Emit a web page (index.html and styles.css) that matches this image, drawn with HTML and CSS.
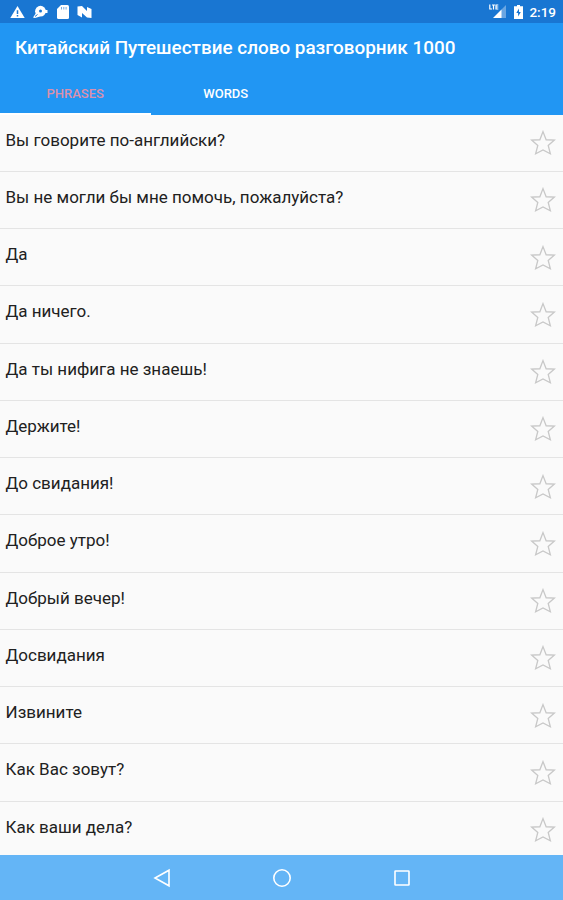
FILE: index.html
```
<!DOCTYPE html>
<html lang="ru">

<head>

	<title>Китайский Путешествие слово разговорник 1000</title>

	<meta charset="utf-8">

	<link rel="stylesheet" href="styles.css">

</head>

<body>

	<!-- star outline shared by all the rows -->
	<svg class="defs" width="0" height="0">
		<symbol id="star" viewBox="0 0 24 24">
			<path d="M12 1.5 L14.9 9 L22.5 9.3 L16.8 14.3 L18.8 22 L12 18.4 L5.2 22 L7.2 14.3 L1.5 9.3 L9.1 9 Z" />
		</symbol>
	</svg>

	<div class="statusbar">
		<div class="notifications">
			<svg width="15" height="14" viewBox="0 0 16 14">
				<path fill="#fff" d="M8 0.5 L15.7 13.5 H0.3 Z" />
				<path stroke="#1976d2" stroke-width="1.6" d="M8 5 V9 M8 10.2 V11.8" />
			</svg>
			<svg width="16" height="14" viewBox="0 0 16 14">
				<circle cx="7.5" cy="6.2" r="5.4" fill="#fff" />
				<path fill="#fff" d="M3 8 L0 12.5 L2 13 L7 11.5 Z M12 5 H14.5 V8 H12 Z" />
				<circle cx="7.5" cy="6" r="1.5" fill="#1976d2" />
				<path stroke="#1976d2" d="M2 11.5 L4.5 9.5" />
			</svg>
			<svg width="12" height="14" viewBox="0 0 12 14">
				<path fill="#fff" d="M4 0 H10.5 Q12 0 12 1.5 V12.5 Q12 14 10.5 14 H1.5 Q0 14 0 12.5 V4 Z" />
				<path stroke="#1976d2" stroke-opacity="0.6" d="M4.5 2 V4.5 M6.8 2 V4.5 M9.1 2 V4.5" />
			</svg>
			<svg width="15" height="14" viewBox="0 0 15 14">
				<path fill="#fff" d="M0.5 1.5 L5 1 L10 6 V2 L14.5 4 V13 L10 12.5 L5 8 V12.5 L0.5 10 Z" />
			</svg>
		</div>
		<div class="system">
			<svg width="18" height="15" viewBox="0 0 18 15">
				<path fill="#6ba6e2" d="M17 1 V14 H12 V6 Z" />
				<path fill="#fff" d="M12.5 5.5 V14 H4 Z" />
				<path fill="none" stroke="#fff" stroke-width="1.2" d="M0.8 0.5 V5 H3 M3 1 H6 M4.5 1 V5.5 M9.3 1 H7 V5 H9.3 M7 3 H9.3" />
			</svg>
			<svg class="battery" width="9" height="14" viewBox="0 0 9 14">
				<path fill="#fff" d="M3 0 H6 V1.3 H9 V14 H0 V1.3 H3 Z" />
				<path fill="#1976d2" d="M5 3.5 L2.3 8 H4.1 V11.5 L6.8 7 H5 Z" />
			</svg>
			<span class="clock">2:19</span>
		</div>
	</div>

	<div class="appbar">
		<h1>Китайский Путешествие слово разговорник 1000</h1>
		<div class="tabs">
			<div class="tab selected">PHRASES</div>
			<div class="tab">WORDS</div>
		</div>
	</div>

	<ul class="phrases">
		<li><span>Вы говорите по-английски?</span><svg class="star"><use href="#star" /></svg></li>
		<li><span>Вы не могли бы мне помочь, пожалуйста?</span><svg class="star"><use href="#star" /></svg></li>
		<li><span>Да</span><svg class="star"><use href="#star" /></svg></li>
		<li><span>Да ничего.</span><svg class="star"><use href="#star" /></svg></li>
		<li><span>Да ты нифига не знаешь!</span><svg class="star"><use href="#star" /></svg></li>
		<li><span>Держите!</span><svg class="star"><use href="#star" /></svg></li>
		<li><span>До свидания!</span><svg class="star"><use href="#star" /></svg></li>
		<li><span>Доброе утро!</span><svg class="star"><use href="#star" /></svg></li>
		<li><span>Добрый вечер!</span><svg class="star"><use href="#star" /></svg></li>
		<li><span>Досвидания</span><svg class="star"><use href="#star" /></svg></li>
		<li><span>Извините</span><svg class="star"><use href="#star" /></svg></li>
		<li><span>Как Вас зовут?</span><svg class="star"><use href="#star" /></svg></li>
		<li><span>Как ваши дела?</span><svg class="star"><use href="#star" /></svg></li>
	</ul>

	<div class="navbar">
		<svg width="20" height="20" viewBox="0 0 20 20"><path d="M17 2.2 V17.8 L3 10 Z" /></svg>
		<svg width="20" height="20" viewBox="0 0 20 20"><circle cx="10" cy="10" r="8.2" /></svg>
		<svg width="20" height="20" viewBox="0 0 20 20"><rect x="3" y="3" width="14" height="14" rx="0.5" /></svg>
	</div>

</body>
</html>
```

FILE: styles.css
```
html,body {
	margin:0;
	padding:0;
	height:100%;
	}
body {
	display:flex;
	flex-direction:column;
	height:900px;
	overflow:hidden;
	background-color:#fafafa;
	font-family:Roboto,"Noto Sans",sans-serif;
	color:#212121;
	}
svg {
	display:block;
	flex:none;
	}
.defs {
	position:absolute;
	}

.statusbar {
	display:flex;
	justify-content:space-between;
	flex:none;
	height:23px;
	padding:0 7px 0 10px;
	background-color:#1976d2;
	color:#fff;
	}
.notifications,
.system {
	display:flex;
	align-items:center;
	}
.notifications {
	gap:8px;
	}
.battery {
	margin:0 6px 0 7px;
	}
.clock {
	font-size:13.5px;
	font-weight:500;
	line-height:24px;
	}

.appbar {
	flex:none;
	height:91.5px;
	background-color:#2196f3;
	color:#fff;
	}
h1 {
	margin:0;
	padding-left:15px;
	font-size:18.9px;
	font-weight:500;
	line-height:49px;
	white-space:nowrap;
	}
.tabs {
	display:flex;
	height:42.5px;
	}
.tab {
	box-sizing:border-box;
	width:150.5px;
	border-bottom:2px solid transparent;
	font-size:13px;
	font-weight:500;
	line-height:43px;
	text-align:center;
	}
.selected {
	border-color:#fff;
	color:#dc90ac;
	}

.phrases {
	flex:1;
	margin:0;
	padding:0;
	overflow:hidden;
	list-style:none;
	}
.phrases li {
	display:flex;
	justify-content:space-between;
	box-sizing:border-box;
	height:57.25px;
	padding:0 7px 0 5.5px;
	border-bottom:1px solid #e4e4e4;
	font-size:17px;
	line-height:51.5px;
	white-space:nowrap;
	}
.star {
	width:26px;
	height:26px;
	margin-top:15.5px;
	fill:none;
	stroke:#c8c8c8;
	stroke-width:1.2;
	}

.navbar {
	display:flex;
	justify-content:center;
	align-items:center;
	flex:none;
	gap:100px;
	height:45px;
	background-color:#64b5f6;
	}
.navbar svg {
	fill:none;
	stroke:#fff;
	stroke-width:1.6;
	}
```
